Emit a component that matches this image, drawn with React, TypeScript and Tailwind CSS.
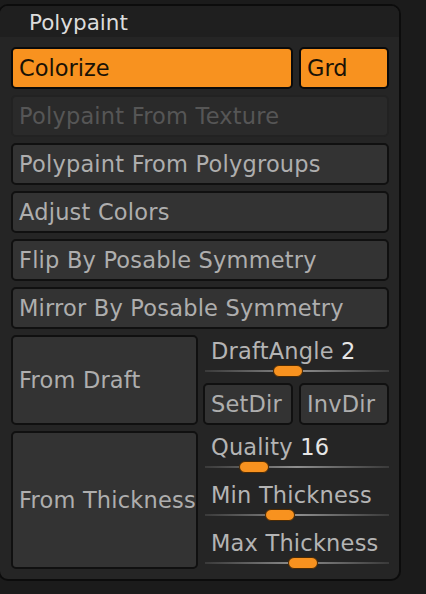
const font = { fontFamily: '"DejaVu Sans", "Liberation Sans", sans-serif' };

function Btn({ label, className = "" }: { label: string; className?: string }) {
  return (
    <div
      className={`flex h-[42px] items-center whitespace-nowrap rounded-[5px] border-2 border-[#101010] bg-[#333333] pl-[6px] text-[22.5px] leading-[26px] tracking-[0.2px] text-[#aeaeae] ${className}`}
    >
      {label}
    </div>
  );
}

function OrangeBtn({ label, className = "" }: { label: string; className?: string }) {
  return (
    <div
      className={`flex h-[42px] items-center rounded-[5px] border-2 border-[#0a0a0a] bg-[#f8921f] pl-[6px] text-[22.5px] leading-[26px] text-[#1a1206] ${className}`}
    >
      {label}
    </div>
  );
}

function Slider({ label, value, thumb }: { label: string; value?: string; thumb: number }) {
  return (
    <div className="relative h-[42px]">
      <div className="whitespace-nowrap pl-[8px] pt-[3px] text-[22.5px] leading-[26px] tracking-[0.2px] text-[#b4b4b4]">
        {label}
        {value && <span className="text-[#e6e6e6]"> {value}</span>}
      </div>
      <div className="absolute left-[2px] right-0 top-[35px] h-[2px] bg-gradient-to-r from-[#3a3a3a] via-[#8f8f8f] to-[#3a3a3a]" />
      <div
        className="absolute top-[30px] h-[12px] w-[30px] rounded-full border border-[#4a2a05] bg-[#f8921f]"
        style={{ left: thumb }}
      />
    </div>
  );
}

export default function App() {
  return (
    <div className="h-[594px] w-[426px] overflow-hidden bg-[#1b1b1b] pt-[4px]" style={font}>
      <div className="ml-[-2px] w-[403px] overflow-hidden rounded-[10px] border-2 border-[#0c0c0c] bg-[#252525]">
        <div className="h-[31px] bg-[#1f1f1f] pl-[29px] pt-[4px] text-[21.5px] leading-[26px] text-[#dcdcdc]">
          Polypaint
        </div>
        <div className="flex flex-col gap-[6px] pb-[10px] pl-[11px] pr-[10px] pt-[10px]">
          <div className="flex gap-[6px]">
            <OrangeBtn label="Colorize" className="flex-1" />
            <OrangeBtn label="Grd" className="w-[90px]" />
          </div>
          <div className="flex h-[42px] items-center rounded-[5px] border-2 border-[#222] bg-[#2a2a2a] pl-[6px] text-[22.5px] leading-[26px] tracking-[0.2px] text-[#565656]">
            Polypaint From Texture
          </div>
          <Btn label="Polypaint From Polygroups" />
          <Btn label="Adjust Colors" />
          <Btn label="Flip By Posable Symmetry" />
          <Btn label="Mirror By Posable Symmetry" />
          <div className="flex gap-[5px]">
            <Btn label="From Draft" className="!h-[90px] w-[187px]" />
            <div className="flex flex-1 flex-col gap-[6px]">
              <Slider label="DraftAngle" value="2" thumb={70} />
              <div className="flex gap-[6px]">
                <Btn label="SetDir" className="flex-1" />
                <Btn label="InvDir" className="w-[90px]" />
              </div>
            </div>
          </div>
          <div className="flex gap-[5px]">
            <Btn label="From Thickness" className="!h-[138px] w-[187px] overflow-hidden" />
            <div className="flex flex-1 flex-col gap-[6px]">
              <Slider label="Quality" value="16" thumb={36} />
              <Slider label="Min Thickness" thumb={62} />
              <Slider label="Max Thickness" thumb={85} />
            </div>
          </div>
        </div>
      </div>
    </div>
  );
}
